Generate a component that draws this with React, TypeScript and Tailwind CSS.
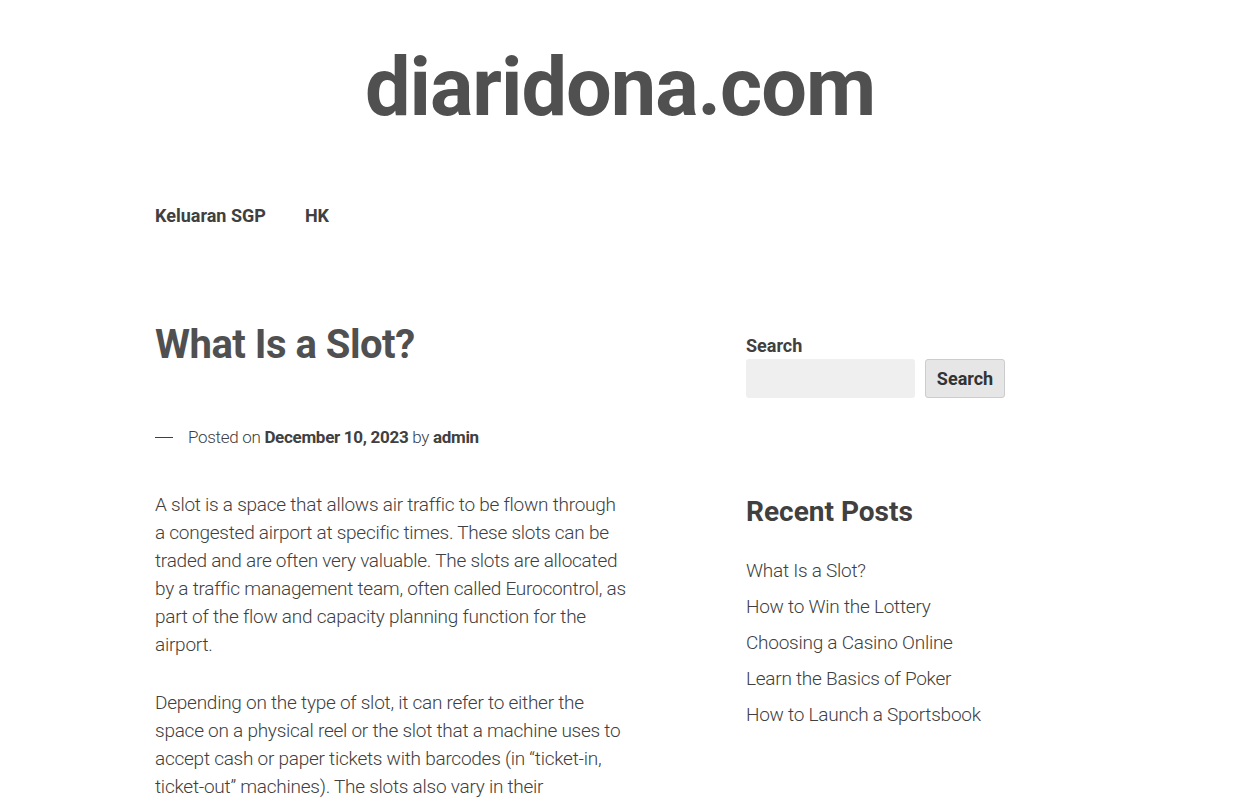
import React from "react";

const recent = [
  "What Is a Slot?",
  "How to Win the Lottery",
  "Choosing a Casino Online",
  "Learn the Basics of Poker",
  "How to Launch a Sportsbook",
];

export default function App() {
  return (
    <div className="min-h-screen bg-white text-[#404040] font-['Roboto',sans-serif]">
      {/* Site header */}
      <header className="pt-[38px] text-center">
        <h1 className="text-[81px] font-bold leading-[100px] tracking-[-1px] text-[#505050]">
          diaridona.com
        </h1>
      </header>

      <nav className="mx-auto mt-[64px] flex w-[930px] gap-[39px] text-[18px] font-bold text-[#404040]">
        <a>Keluaran SGP</a>
        <a>HK</a>
      </nav>

      <div className="mx-auto mt-[88px] flex w-[930px] justify-between">
        {/* Main article */}
        <main className="w-[485px]">
          <h2 className="text-[40px] font-bold leading-[56px] tracking-[-0.5px] text-[#505050]">
            What Is a Slot?
          </h2>
          <div className="mt-[52px] flex items-center text-[17px] font-light tracking-[-0.3px] text-[#404040]">
            <span className="mr-[15px] inline-block h-px w-[18px] bg-[#404040]" />
            <span>Posted on&nbsp;</span>
            <span className="font-bold">December 10, 2023</span>
            <span>&nbsp;by&nbsp;</span>
            <span className="font-bold">admin</span>
          </div>
          <div className="mt-[40px] space-y-[30px] text-[19px] font-light leading-[28px] tracking-[-0.25px]">
            <p>
              A slot is a space that allows air traffic to be flown through
              <br />
              a congested airport at specific times. These slots can be
              <br />
              traded and are often very valuable. The slots are allocated
              <br />
              by a traffic management team, often called Eurocontrol, as
              <br />
              part of the flow and capacity planning function for the
              <br />
              airport.
            </p>
            <p>
              Depending on the type of slot, it can refer to either the
              <br />
              space on a physical reel or the slot that a machine uses to
              <br />
              accept cash or paper tickets with barcodes (in “ticket-in,
              <br />
              ticket-out” machines). The slots also vary in their
            </p>
          </div>
        </main>

        {/* Sidebar */}
        <aside className="w-[339px] pt-[16px]">
          <label className="block text-[18px] font-bold leading-[26px] text-[#404040]">Search</label>
          <div className="flex gap-[10px]">
            <input className="h-[39px] w-[169px] rounded-[3px] bg-[#efefef] px-2 outline-none" />
            <button className="h-[39px] w-[80px] rounded-[3px] border border-[#cccccc] bg-[#e6e6e6] text-[18px] font-bold text-[#333333]">
              Search
            </button>
          </div>

          <h2 className="mt-[94px] text-[28px] font-bold leading-[40px] text-[#404040]">
            Recent Posts
          </h2>
          <ul className="mt-[25px] space-y-[8px] text-[19px] font-light leading-[28px] tracking-[-0.25px]">
            {recent.map((r) => (
              <li key={r}>
                <a>{r}</a>
              </li>
            ))}
          </ul>
        </aside>
      </div>
    </div>
  );
}
